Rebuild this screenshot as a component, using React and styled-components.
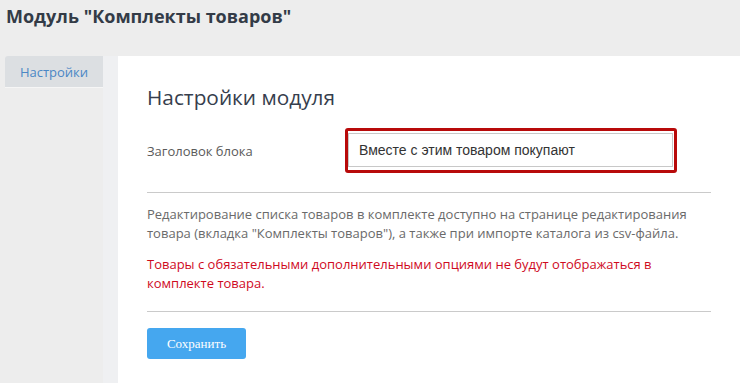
import styled, { createGlobalStyle } from "styled-components";

const GlobalStyle = createGlobalStyle`
  html, body {
    margin: 0;
    padding: 0;
    background: #ededed;
    font-family: "Open Sans", "Noto Sans", sans-serif;
  }
  * { box-sizing: border-box; }
`;

function App() {
  return (
    <>
      <GlobalStyle />
      <Page>
        <Header>Модуль "Комплекты товаров"</Header>
        <Body>
          <Sidebar>
            <Tab>Настройки</Tab>
          </Sidebar>
          <Panel>
            <Heading>Настройки модуля</Heading>
            <FieldRow>
              <Label>Заголовок блока</Label>
              <Highlight>
                <Input defaultValue="Вместе с этим товаром покупают" />
              </Highlight>
            </FieldRow>
            <Divider />
            <Note>
              Редактирование списка товаров в комплекте доступно на странице
              редактирования товара (вкладка "Комплекты товаров"), а также при
              импорте каталога из csv-файла.
            </Note>
            <Note $warning>
              Товары с обязательными дополнительными опциями не будут
              отображаться в комплекте товара.
            </Note>
            <Divider />
            <SaveButton>Сохранить</SaveButton>
          </Panel>
        </Body>
      </Page>
    </>
  );
}

export default App;

const Page = styled.div`
  width: 740px;
  height: 383px;
  display: flex;
  flex-direction: column;
  overflow: hidden;
  background: #ededed;
`;

const Header = styled.h1`
  margin: 0;
  height: 56px;
  padding: 4px 6px 0;
  font-size: 18px;
  line-height: 24px;
  font-weight: 700;
  color: #333b47;
`;

const Body = styled.div`
  flex: 1;
  display: flex;
`;

const Sidebar = styled.div`
  width: 103px;
  padding-left: 5px;
  flex-shrink: 0;
`;

const Tab = styled.div`
  height: 32px;
  display: flex;
  align-items: center;
  justify-content: center;
  background: #dcdfe2;
  border-radius: 3px 0 0 0;
  border-bottom: 1px solid #f6f6f6;
  font-size: 13px;
  color: #4b87c5;
`;

const Panel = styled.div`
  flex: 1;
  background: #fff;
  border-left: 15px solid #eff0f2;
  padding: 27px 29px 0;
`;

const Heading = styled.h2`
  margin: 0;
  font-size: 20.8px;
  line-height: 28px;
  font-weight: 400;
  color: #363e4d;
`;

const FieldRow = styled.div`
  display: flex;
  align-items: center;
  margin-top: 17px;
`;

const Label = styled.div`
  width: 198px;
  flex-shrink: 0;
  font-size: 13px;
  color: #5a5a5a;
`;

const Highlight = styled.div`
  width: 332px;
  border: 3px solid #b80a0a;
  border-radius: 3px;
  padding: 2px 1px 3px 0;
`;

const Input = styled.input`
  display: block;
  width: 100%;
  height: 34px;
  border: 1px solid #c8c8c8;
  padding: 0 10px;
  font-family: "Liberation Sans", Arial, sans-serif;
  font-size: 14px;
  color: #333;
  outline: none;
`;

const Divider = styled.hr`
  margin: 19px 0 0;
  border: 0;
  border-top: 1px solid #cacaca;
  & + p { margin-top: 12px; }
`;

const Note = styled.p`
  margin: 12px 0 0;
  font-size: 13px;
  line-height: 19px;
  color: ${(p) => (p.$warning ? "#cf0a1e" : "#6a6a6a")};
  & + hr { margin-top: 18px; }
`;

const SaveButton = styled.button`
  margin-top: 16px;
  width: 99px;
  height: 31px;
  border: 0;
  border-radius: 3px;
  background: #45a7ef;
  color: #fff;
  font-family: "Liberation Serif", "Times New Roman", serif;
  font-size: 13px;
  cursor: pointer;
`;
